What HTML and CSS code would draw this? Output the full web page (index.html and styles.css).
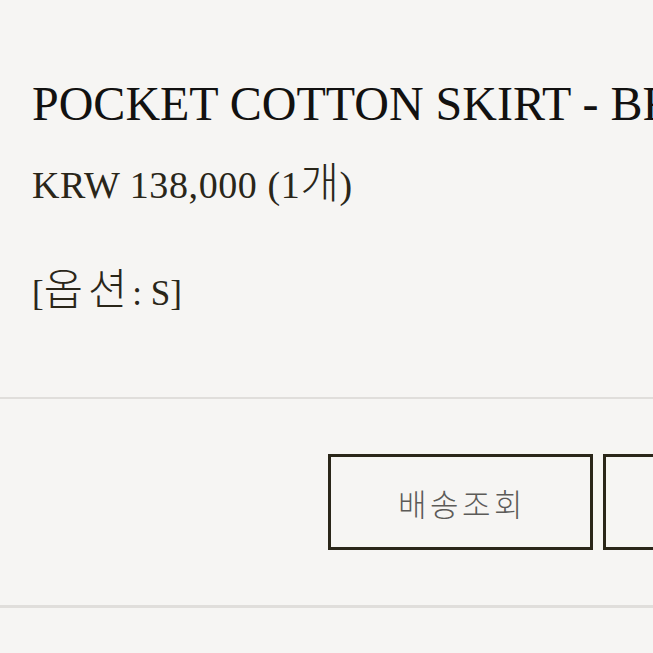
FILE: index.html
```html
<!DOCTYPE html>
<html lang="ko">
<head>
<meta charset="utf-8">
<title>Order</title>
<link rel="stylesheet" href="styles.css">
</head>
<body>
<div class="page">
  <section class="item">
    <h1 class="item-name">POCKET COTTON SKIRT - BROWN</h1>
    <p class="item-price">KRW 138,000 (1<span class="ko">개</span>)</p>
    <p class="item-option">[<span class="ko">옵션</span>: S]</p>
  </section>
  <div class="actions">
    <button class="btn" type="button">배송조회</button>
    <button class="btn" type="button">구매후기</button>
  </div>
</div>
</body>
</html>
```
FILE: styles.css
```css
html, body {
  margin: 0;
  padding: 0;
  background: #f6f5f3;
  overflow: hidden;
}
.page {
  width: 653px;
  height: 653px;
  overflow: hidden;
}
.item {
  padding: 80px 0 86px 32px;
  border-bottom: 2px solid #e0dedb;
  font-family: "Liberation Serif", "Noto Sans CJK KR", serif;
}
.item-name {
  margin: 0;
  font-size: 48px;
  line-height: 47px;
  font-weight: 400;
  color: #121110;
  white-space: nowrap;
}
.item-price {
  margin: 39px 0 0;
  font-size: 38px;
  line-height: 38px;
  letter-spacing: 0.6px;
  color: #2a2619;
  white-space: nowrap;
}
.item-option {
  margin: 73px 0 0;
  font-size: 35px;
  line-height: 34px;
  color: #2a2619;
  white-space: nowrap;
}
.ko {
  font-family: "Noto Sans CJK KR", sans-serif;
  font-weight: 300;
  font-size: 1.1em;
  line-height: 0;
}
.item-option .ko {
  font-size: 1.22em;
  letter-spacing: 5px;
}
.actions {
  display: flex;
  gap: 10px;
  padding: 55px 0 55px 328px;
  border-bottom: 3px solid #e0dedb;
  overflow: hidden;
}
.btn {
  flex: 0 0 265px;
  height: 96px;
  box-sizing: border-box;
  border: 3px solid #2a2619;
  background: #f6f5f3;
  font-family: "Noto Sans CJK KR", sans-serif;
  font-weight: 300;
  font-size: 31px;
  letter-spacing: 3.5px;
  color: #5c5b58;
  padding: 0;
  text-indent: 3px;
}
```
